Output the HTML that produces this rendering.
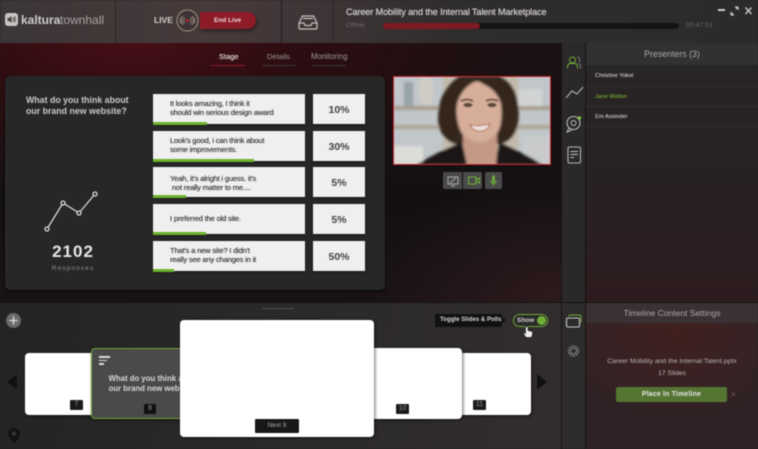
<!DOCTYPE html>
<html><head><meta charset="utf-8">
<style>
html,body{margin:0;padding:0;background:#222}
#r{position:relative;width:758px;height:449px;overflow:hidden;font-family:"Liberation Sans",sans-serif;color:#ddd;background:#222;filter:blur(.45px)}
#r div,#r svg{position:absolute}
.t{white-space:nowrap}
.opt{left:153px;width:152px;height:30px;background:#efefef;box-shadow:0 1px 2px rgba(0,0,0,.5);color:#444;font-size:7.600px;line-height:9.200px;letter-spacing:-.2px;text-shadow:0 0 .5px #444}
.opt .g{left:0;bottom:-1px;height:3px;background:#6cb32e}
.opt .x{left:17px;top:5px;white-space:nowrap}
.pct{left:313px;width:52px;height:30px;background:#efefef;box-shadow:0 1px 2px rgba(0,0,0,.5);color:#444;font-size:10.500px;font-weight:bold;line-height:33px;text-align:center}
.num{background:#1a1a1a;color:#999;font-size:7px;line-height:10px;text-align:center;border-radius:1px}
.sl{background:#fff;border-radius:4px;box-shadow:1px 1px 3px rgba(0,0,0,.6)}
</style></head><body>
<div id="r">
<!-- header -->
<div style="left:0;top:0;width:758px;height:43px;background:linear-gradient(90deg,#3c3636 0,#473a3b 28%,#3f3536 42%,#302d2d 60%,#2c2b2b 100%)"></div>
<div style="left:115px;top:0;width:1px;height:43px;background:#292525"></div>
<div style="left:281px;top:0;width:1px;height:43px;background:#1f1c1c"></div>
<div style="left:333px;top:0;width:1px;height:43px;background:#292525"></div>
<!-- logo -->
<div style="left:5px;top:13px;width:12.500px;height:13px;background:#c9c5c5;border-radius:3px"></div>
<svg style="left:5px;top:13px" width="13" height="13" viewBox="0 0 13 13"><path d="M2.500 5h1.500L6.500 3v7L4 8H2.500z" fill="#4a4040"/><path d="M8 4.500q1 2 0 4M9.500 3.500q1.500 3 0 6" stroke="#4a4040" fill="none"/></svg>
<div class="t" style="left:21px;top:11px;font-size:12px;line-height:18px;font-weight:bold;color:#cfcaca">kaltura</div>
<div class="t" style="left:60px;top:11px;font-size:12px;line-height:18px;color:#a9a4a4">townhall</div>
<!-- live -->
<div class="t" style="left:154px;top:14px;font-size:8.500px;line-height:12px;font-weight:bold;color:#d5d0d0">LIVE</div>
<div style="left:200px;top:12px;width:56px;height:17px;background:#8e1b28;border-radius:0 9px 9px 0;box-shadow:1px 2px 3px rgba(0,0,0,.45)"></div>
<div class="t" style="left:214px;top:15px;font-size:6.500px;line-height:11px;font-weight:bold;color:#e8d5d5">End Live</div>
<svg style="left:175px;top:8px" width="25" height="25" viewBox="0 0 25 25"><circle cx="12.500" cy="12.500" r="10.500" fill="#3f3435" stroke="#a3977f" stroke-width="1"/><path d="M8 8q-3 4.500 0 9M6 9.500q-1.500 3 0 6M17 8q3 4.500 0 9M19 9.500q1.500 3 0 6M9.500 9.500q-1.500 3 0 6M15.500 9.500q1.500 3 0 6" stroke="#93877a" fill="none" stroke-width="1"/><circle cx="12.500" cy="12.500" r="1.300" fill="#e21f2f"/></svg>
<svg style="left:298px;top:15px" width="20" height="15" viewBox="0 0 20 15"><path d="M4.500 1h11L19 8v5a1 1 0 0 1-1 1H2a1 1 0 0 1-1-1V8zM1 8h5l1 2.500h6L14 8h5M5 3.500h10" fill="none" stroke="#c4c0c0" stroke-width="1.200"/></svg>
<!-- title -->
<div class="t" style="left:346px;top:6px;font-size:9.100px;line-height:12px;color:#d2cfcf;letter-spacing:-.1px;text-shadow:0 0 .5px #d2cfcf">Career Mobility and the Internal Talent Marketplace</div>
<div class="t" style="left:346px;top:21px;font-size:6.500px;line-height:10px;color:#6d6a6a">Offline</div>
<div style="left:383px;top:23px;width:296px;height:6px;background:#141414;border-radius:3px"></div>
<div style="left:383px;top:23px;width:97px;height:6px;background:#7e1a24;border-radius:3px"></div>
<div class="t" style="left:686px;top:21px;font-size:6.500px;line-height:10px;color:#6a6767;letter-spacing:.2px">00:47:51</div>
<div style="left:718px;top:9px;width:7px;height:2px;background:#ccc"></div>
<svg style="left:730px;top:6px" width="28" height="10" viewBox="0 0 28 10"><path d="M1 9l2-2M1 9h3M1 9V6M8 1L6 3M8 1H5M8 1v3" stroke="#ccc" fill="none" stroke-width="1.200"/><path d="M15.500 1.500l6 6.500M21.500 1.500l-6 6.500" stroke="#ccc" stroke-width="1.300"/></svg>
<!-- main -->
<div style="left:0;top:43px;width:561px;height:260px;background:radial-gradient(ellipse 200px 120px at 560px 260px,#2e1b1e 0,rgba(30,20,22,0) 100%),radial-gradient(ellipse 400px 150px at 130px 0,#470f17 0,#2d0d11 40%,rgba(25,12,13,0) 100%),linear-gradient(180deg,#1a1112,#141011 60%,#181213)"></div>
<div class="t" style="left:219px;top:51px;font-size:7.500px;line-height:11px;color:#d8d0d0;text-shadow:0 0 .5px #d8d0d0">Stage</div>
<div style="left:211px;top:65px;width:34px;height:1px;background:#8e1b28"></div>
<div class="t" style="left:267px;top:51px;font-size:7.500px;line-height:11px;color:#9c9898">Details</div>
<div style="left:262px;top:65px;width:34px;height:1px;background:#3c3a3a"></div>
<div class="t" style="left:311px;top:51px;font-size:7.800px;line-height:11px;color:#9c9898">Monitoring</div>
<div style="left:312px;top:65px;width:34px;height:1px;background:#3c3a3a"></div>
<!-- card -->
<div style="left:5px;top:76px;width:380px;height:214px;background:#272727;border-radius:5px;box-shadow:0 1px 2px #000"></div>
<div class="t" style="left:26px;top:95px;font-size:8.800px;line-height:10.800px;font-weight:bold;color:#c8c8c8">What do you think about<br>our brand new website?</div>
<svg style="left:40px;top:185px" width="64" height="48" viewBox="0 0 64 48" fill="none"><path d="M7 44L23 18 39 28 55 9" stroke="#ddd" stroke-width="1.200"/><g fill="#272727" stroke="#ddd" stroke-width="1.300"><circle cx="7" cy="44" r="2"/><circle cx="23" cy="18" r="2"/><circle cx="39" cy="28" r="2"/><circle cx="55" cy="9" r="2"/></g></svg>
<div class="t" style="left:32px;top:242px;width:82px;text-align:center;font-size:17px;line-height:20px;font-weight:bold;color:#e6e6e6;letter-spacing:1px">2102</div>
<div class="t" style="left:32px;top:264px;width:82px;text-align:center;font-size:6.500px;line-height:9px;color:#8f8f8f;letter-spacing:1.100px">Responses</div>

<div class="opt" style="top:94px"><div class="g" style="width:54px"></div><div class="x">It looks amazing, I think it<br>should win serious design award</div></div>
<div class="pct" style="top:94px">10%</div>
<div class="opt" style="top:131px"><div class="g" style="width:101px"></div><div class="x">Look's good, i can think about<br>some improvements.</div></div>
<div class="pct" style="top:131px">30%</div>
<div class="opt" style="top:167px"><div class="g" style="width:33px"></div><div class="x" style="top:6.500px">Yeah, it's alright i guess. it's<br>&nbsp;not really matter to me....</div></div>
<div class="pct" style="top:167px">5%</div>
<div class="opt" style="top:204px"><div class="g" style="width:53px"></div><div class="x" style="top:9.500px">I preferred the old site.</div></div>
<div class="pct" style="top:204px">5%</div>
<div class="opt" style="top:240.500px"><div class="g" style="width:21px"></div><div class="x" style="top:5.500px">That's a new site? I didn't<br>really see any changes in it</div></div>
<div class="pct" style="top:240.500px">50%</div>
<!-- video -->
<svg style="left:393px;top:76px" width="158" height="89" viewBox="0 0 158 89">
<defs><filter id="b"><feGaussianBlur stdDeviation="1.200"/></filter><filter id="b2"><feGaussianBlur stdDeviation=".6"/></filter><clipPath id="c"><rect width="158" height="89"/></clipPath></defs>
<g clip-path="url(#c)">
<rect width="158" height="89" fill="#c0c6ca"/>
<g filter="url(#b)">
<rect x="50" y="0" width="75" height="89" fill="#c3b9aa"/>
<rect x="0" y="30" width="158" height="4" fill="#a69e8e"/><rect x="0" y="49" width="158" height="4" fill="#ada594"/>
<ellipse cx="33" cy="15" rx="8" ry="15" fill="#cfccc6"/><rect x="11" y="6" width="9" height="24" fill="#98a2aa"/>
<rect x="125" y="13" width="24" height="17" fill="#d2d4d4"/><rect x="0" y="70" width="30" height="19" fill="#dcdcd8"/><rect x="130" y="60" width="28" height="29" fill="#c8cacb"/>
<path d="M66 0H106Q122 6 125 28Q128 48 120 60Q114 68 104 68H62Q48 64 45 46Q44 14 66 0z" fill="#36261f"/>
<path d="M70 80L70 56H104L104 80L106 89H68z" fill="#c49a86"/>
<path d="M78 8Q84 3 90 8Q104 14 108 28Q110 46 105 56Q96 66 87 66Q76 66 68 56Q62 42 64 28Q68 14 78 8z" fill="#d6ae9a"/>
<path d="M23 89Q44 76 69 66L71 75 74 89zM106 66Q130 76 150 89H103L104 78z" fill="#1b1718"/>
</g>
<g filter="url(#b2)">
<path d="M68 25q6-3 12 0M93 25q6-3 12 0" stroke="#4b342b" fill="none" stroke-width="1.300"/>
<ellipse cx="75" cy="29" rx="4.500" ry="2" fill="#5a453c"/><ellipse cx="99" cy="29" rx="4.500" ry="2" fill="#5a453c"/>
<path d="M77 49q10 2 20-1q-3 7-10 7t-10-6z" fill="#efe2db" stroke="#a8584e" stroke-width=".8"/>
</g>
</g>
<rect x=".5" y=".5" width="157" height="88" fill="none" stroke="#c8242c"/>
</svg>
<div style="left:443px;top:172px;width:19px;height:17px;background:#4a4a4a;border-radius:2px 0 0 2px"></div>
<div style="left:462.500px;top:172px;width:19px;height:17px;background:#4a4a4a;border-radius:0 2px 2px 0"></div>
<div style="left:485px;top:172px;width:17px;height:17px;background:#4a4a4a;border-radius:2px"></div>
<svg style="left:443px;top:172px" width="60" height="17" viewBox="0 0 60 17" fill="none"><path d="M5 5h10v7H5zM8 14h4M7 11l6-5" stroke="#a9a9a9"/><path d="M25.500 5h7.500v7h-7.500zM33 8l3.500-2v5L33 9.500" stroke="#6fae37" stroke-width="1.100"/><path d="M50.500 4.500v5" stroke="#6fae37" stroke-width="2.600" stroke-linecap="round"/><path d="M47.800 8.500q0 3 2.700 3t2.700-3M50.500 11.500v2.500" stroke="#6fae37"/></svg>
<!-- right sidebar -->
<div style="left:561px;top:43px;width:24px;height:260px;background:#2a2828;border-left:1px solid #161414;box-sizing:border-box"></div>
<svg style="left:561px;top:50px" width="24" height="118" viewBox="0 0 24 118" fill="none">
<g stroke="#6fae37" stroke-width="1"><circle cx="11.500" cy="10" r="3"/><path d="M6.500 18.500v-2q0-2.500 2.500-3h5q2.500 .5 2.500 3v2"/></g><path d="M16 7a3 3 0 0 1 1.500 5.500M18 13.500q1.500 1 1.500 3v2" stroke="#777"/>
<path d="M5 48l6-7 5 3 6-7" stroke="#b2b2b2" stroke-width="1.100"/>
<circle cx="12.500" cy="73" r="6.500" stroke="#bdbdbd" stroke-width="1.100"/><path d="M8 78l-2 4 5-2" stroke="#bdbdbd"/><circle cx="12.500" cy="73" r="2.500" stroke="#bdbdbd"/><circle cx="18.500" cy="68" r="1.700" fill="#7cc63e"/>
<rect x="7" y="97" width="12.500" height="16" rx="1.500" stroke="#b5b5b5" stroke-width="1.100"/><path d="M9.500 101.500h7.500M9.500 104.500h7.500M9.500 107.500h3.500" stroke="#c8c8c8" stroke-width="1.100"/>
</svg>
<!-- presenters -->
<div style="left:585px;top:43px;width:173px;height:260px;background:linear-gradient(180deg,#292626 0,#272223 45%,#2e1c1f 100%);border-left:1px solid #141212;box-sizing:border-box"></div>
<div style="left:586px;top:43px;width:172px;height:22px;background:#323030"></div>
<div class="t" style="left:586px;top:47px;width:172px;text-align:center;font-size:8.800px;line-height:14px;color:#a9a6a6">Presenters (3)</div>
<div class="t" style="left:595px;top:72px;font-size:5.800px;line-height:9px;color:#bcbaba;text-shadow:0 0 .4px #bcbaba">Christine Yokoi</div>
<div style="left:586px;top:86px;width:172px;height:1px;background:#343031"></div>
<div class="t" style="left:595px;top:92.500px;font-size:5.800px;line-height:9px;color:#6c9c2d;text-shadow:0 0 .4px #6c9c2d">Jane Walton</div>
<div style="left:586px;top:106px;width:172px;height:1px;background:#343031"></div>
<div class="t" style="left:595px;top:113px;font-size:5.800px;line-height:9px;color:#bcbaba;text-shadow:0 0 .4px #bcbaba">Em Assinder</div>
<div style="left:586px;top:126px;width:172px;height:1px;background:#343031"></div>
<!-- bottom -->
<div style="left:0;top:302px;width:561px;height:147px;background:linear-gradient(100deg,#252424 0,#2b2929 50%,#332e2e 100%);border-top:1px solid #151313;box-sizing:border-box"></div>
<div style="left:262px;top:307.500px;width:31px;height:0;border-top:1px dotted #777"></div>
<div style="left:6px;top:312.500px;width:15px;height:15px;border-radius:50%;background:#6a6a6a"></div>
<svg style="left:6px;top:312.500px" width="15" height="15"><path d="M7.500 3.500v8M3.500 7.500h8" stroke="#e0e0e0" stroke-width="1.300"/></svg>
<svg style="left:7px;top:374px" width="11" height="16"><path d="M10 0v15.500L0 8z" fill="#111"/></svg>
<svg style="left:537px;top:374px" width="11" height="16"><path d="M0 0v15.500L10 8z" fill="#111"/></svg>
<svg style="left:7px;top:427px" width="14" height="20"><path d="M7 17Q1 10 1 7a6 6 0 0 1 12 0q0 3-6 10z" fill="#141414"/><circle cx="7" cy="6.500" r="2" fill="#3a3a3a"/></svg>
<!-- slides -->
<div class="sl" style="left:25px;top:353px;width:90px;height:62px"></div>
<div class="num" style="left:70px;top:400px;width:13px;height:10px">7</div>
<div style="left:91px;top:348px;width:100px;height:71px;background:#4a4a4a;border:1px solid #6da53a;border-radius:4px;box-sizing:border-box;box-shadow:1px 1px 3px rgba(0,0,0,.6)"></div>
<div style="left:99px;top:356px;width:11px;height:1.500px;background:#ddd"></div>
<div style="left:99px;top:359.500px;width:8px;height:1.500px;background:#ddd"></div>
<div style="left:99px;top:363px;width:5px;height:1.500px;background:#ddd"></div>
<div class="t" style="left:108.500px;top:374px;font-size:7.800px;line-height:9.500px;font-weight:bold;color:#d5d5d5;width:72px;overflow:hidden">What do you think about<br>our brand new website?</div>
<div class="num" style="left:144px;top:404px;width:12px;height:10px;background:#0f0f0f">8</div>
<div class="sl" style="left:440px;top:353px;width:91px;height:62px"></div>
<div class="num" style="left:473px;top:400px;width:13px;height:10px">11</div>
<div class="sl" style="left:360px;top:348px;width:101.500px;height:71px"></div>
<div class="num" style="left:396px;top:404px;width:13px;height:10px">10</div>
<div class="sl" style="left:180px;top:320px;width:194px;height:117px"></div>
<div class="num" style="left:255px;top:419px;width:44px;height:14px;line-height:14px;font-size:6.500px;color:#aaa;background:#181818">Next 9</div>
<!-- toggle -->
<div style="left:435px;top:313.500px;width:67px;height:13px;background:#111;border-radius:1px"></div>
<div style="left:502px;top:317px;width:0;height:0;border-left:4px solid #111;border-top:3px solid transparent;border-bottom:3px solid transparent"></div>
<div class="t" style="left:440px;top:314px;font-size:6.100px;line-height:12px;font-weight:bold;color:#d5d5d5">Toggle Slides &amp; Polls</div>
<div style="left:513px;top:314px;width:35px;height:13px;border:1px solid #6da53a;border-radius:7px;box-sizing:border-box;background:#2a2a2a"></div>
<div class="t" style="left:517px;top:315px;font-size:6.500px;line-height:11px;font-weight:bold;color:#cfcfcf">Show</div>
<div style="left:537px;top:316px;width:9px;height:9px;border-radius:50%;background:#6fae37"></div>
<svg style="left:522px;top:325px" width="12" height="14" viewBox="0 0 12 14"><path d="M3.500 1.500v7L2 7.500 1.500 9l2.500 3.500h5.500l1-3V6.500L6 5.500v-4z" fill="#eee" stroke="#222" stroke-width=".7"/></svg>
<!-- bottom sidebar -->
<div style="left:561px;top:302px;width:24px;height:147px;background:#2e2b2b;border-left:1px solid #141212;border-top:1px solid #151313;box-sizing:border-box"></div>
<svg style="left:561px;top:313px" width="24" height="48" viewBox="0 0 24 48" fill="none"><rect x="5.500" y="5" width="13" height="9" rx="1.500" stroke="#c8c8c8" stroke-width="1.100"/><path d="M8 3.500q0-1.500 1.500-1.500h9Q20 2 20 3.500v6" stroke="#6fae37"/><circle cx="12.500" cy="38" r="3" stroke="#8c8c8c"/><circle cx="12.500" cy="38" r="5" stroke="#8c8c8c" stroke-dasharray="2 1.100" stroke-width="1.300"/></svg>
<div style="left:585px;top:302px;width:173px;height:147px;background:radial-gradient(ellipse 120px 90px at 90px 30px,#41201f 0,#372224 60%,#2f2224 100%);border-left:1px solid #141212;border-top:1px solid #151313;box-sizing:border-box"></div>
<div style="left:586px;top:303px;width:172px;height:20px;background:#3a3232"></div>
<div class="t" style="left:586px;top:307px;width:172px;text-align:center;font-size:8.500px;line-height:13px;color:#a9a6a6">Timeline Content Settings</div>
<div class="t" style="left:586px;top:356px;width:172px;text-align:center;font-size:6.800px;line-height:11.500px;color:#b8b4b4">Career Mobility and the Internal Talent.pptx<br>17 Slides</div>
<div style="left:616px;top:387px;width:111px;height:15px;background:#557533;border-radius:2px"></div>
<div class="t" style="left:616px;top:387px;width:111px;text-align:center;font-size:7px;line-height:15px;font-weight:bold;color:#e4e4e4;letter-spacing:.15px">Place In Timeline</div>
<div class="t" style="left:731px;top:390px;font-size:8px;line-height:10px;color:#6e6868">×</div>
</div>
</body></html>
